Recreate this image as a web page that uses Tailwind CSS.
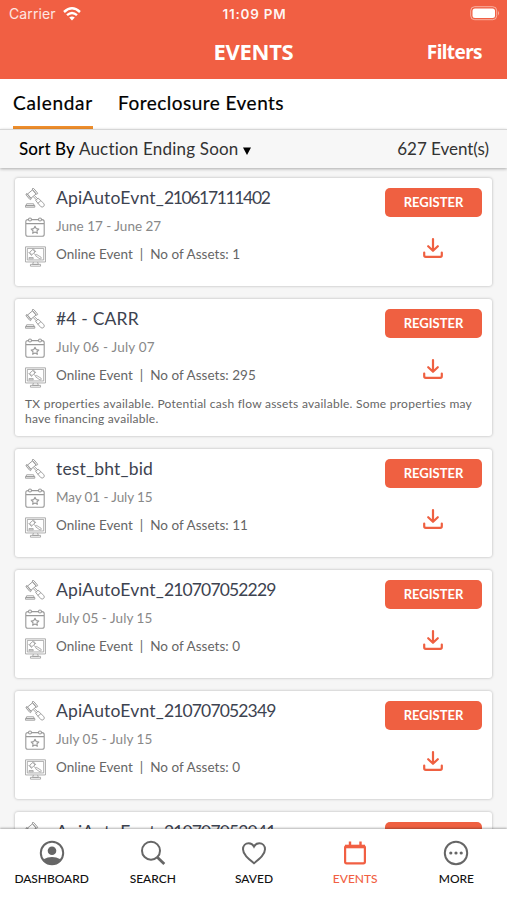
<!DOCTYPE html>
<html lang="en">
<head>
<meta charset="utf-8">
<title>Events</title>
<script src="https://cdn.jsdelivr.net/npm/@tailwindcss/browser@4"></script>
</head>
<body class="bg-[#f6f6f6]">
<svg class="hidden">
  <symbol id="gavel" viewBox="0 0 20 20" fill="none" stroke="currentColor" stroke-width=".9" stroke-linejoin="round" stroke-linecap="round">
    <g transform="translate(6.800 6) rotate(-40)"><rect x="-3.300" y="-2.700" width="6.600" height="5.400"/><rect x="-5" y="-3.500" width="1.700" height="7" rx=".8"/><rect x="3.300" y="-3.500" width="1.700" height="7" rx=".8"/></g>
    <path d="m9.700 7.900 3.200 3M8.600 8.900l3 3.200M13.400 10.300l5.400 5.200q1.200 1.600-.2 3-1.500 1.200-2.900 0l-4.800-5.700zM13 15.200l2.700-2.400M2 15.800h6.600l.6 1.800H1.400zM.8 17.600h9V19.200H.8z"/>
  </symbol>
  <symbol id="date" viewBox="0 0 20 20" fill="none" stroke="currentColor" stroke-width="1.100" stroke-linejoin="round">
    <path d="M3.500 2.600H3Q.8 2.600.8 4.800v12.400Q.8 19.300 3 19.300h14q2.200 0 2.200-2.100V4.800q0-2.200-2.200-2.200h-.5M6.500 2.600h7M.8 6.600h18.400"/>
    <circle cx="5" cy="2.500" r="1.500"/><circle cx="15" cy="2.500" r="1.500"/>
    <path d="m10 9.300 1.200 2.300 2.600.4-1.900 1.800.5 2.500-2.400-1.200-2.400 1.200.5-2.500L6.200 12l2.600-.4z"/>
  </symbol>
  <symbol id="online" viewBox="0 0 20 20" fill="none" stroke="currentColor" stroke-width=".75" stroke-linejoin="round">
    <path d="M.5.800h19v14.400H.5zM2.200 2.300h15.600v11H2.200zM8 15.200l-.7 2.300h5.400l-.7-2.300M5.200 17.500h9.600v1.700H5.200z"/>
    <g transform="translate(7 5.800) rotate(-40)"><rect x="-2" y="-1.600" width="4" height="3.200"/><path d="M-2.700-2.200v4.400M2.700-2.200v4.400"/></g>
    <path d="m8.500 7.200 2 1.500M11 8l4.300 2.700q.9 1.300-.9 1.700l-4.300-3zM3.800 11h4v1.200h-4z"/>
  </symbol>
  <symbol id="download" viewBox="0 0 20 20" fill="none" stroke="currentColor" stroke-width="2.200" stroke-linejoin="round" stroke-linecap="round">
    <path d="M10 1.100v11.500M5.200 8.200l4.800 4.600 4.800-4.600M1.200 14.500v2.800q0 1.500 1.500 1.500h14.600q1.500 0 1.500-1.500v-2.800"/>
  </symbol>
</svg>

<div class="w-[507px] h-[900px] flex flex-col overflow-hidden font-[Lato,sans-serif] text-black">
  <header class="shrink-0 h-[79px] bg-[#f15f43] text-white">
    <div class="h-7 grid grid-cols-3 items-center pl-[9px] pr-[7px] pb-px font-[Inter,sans-serif] text-[13px]">
      <div class="flex items-center gap-[7px] text-white/85"><span class="text-[14px] tracking-[0.1px]">Carrier</span>
        <svg class="w-[18px] h-[14px] text-white" viewBox="0 0 18 14" fill="none" stroke="currentColor" stroke-width="2.400"><path d="M1 5q8-7.400 16 0M4 8.200q5-4.400 10 0"/><path d="m9 13.500-2.800-3q2.800-2.200 5.600 0z" fill="currentColor" stroke="none"/></svg>
      </div>
      <div class="text-center font-semibold text-white/95 pt-px"><span class="text-[13.500px] tracking-[0.750px]">11:09 PM</span></div>
      <svg class="w-[30px] h-[15px] justify-self-end" viewBox="0 0 30 15"><rect x=".7" y=".7" width="26" height="13" rx="4" fill="none" stroke="#fff" stroke-opacity=".5"/><rect x="2.500" y="2.500" width="22.500" height="9.500" rx="2.500" fill="#fff"/><path d="M28 5q2 2.200 0 4.500z" fill="#fff" fill-opacity=".5"/></svg>
    </div>
    <div class="grid grid-cols-3 h-12 items-center font-['Noto_Sans',sans-serif] font-bold">
      <h1 class="col-start-2 text-center text-[22px] font-bold pb-[2px]"><span class="tracking-[-0.300px]">EVENTS</span></h1>
      <div class="text-right pr-[25px] pt-px text-[19px]"><span class="tracking-[-0.6px]">Filters</span></div>
    </div>
  </header>
  <nav class="shrink-0 h-[50px] bg-white flex gap-[25px] px-[13px] text-[19px] leading-[48px] font-normal [-webkit-text-stroke:0.2px_black]">
    <div class="h-[50px] w-[80px] border-b-3 border-[#ee8e2c]"><span class="tracking-[0.7px]">Calendar</span></div>
    <div><span class="tracking-[0.48px]">Foreclosure Events</span></div>
  </nav>
  <div class="relative z-10 shrink-0 h-[39px] bg-[#f7f7f7] border-t border-[#d6d6d6] shadow-[0_1px_3px_rgba(0,0,0,0.3)] flex justify-between items-center pl-[19px] pr-[18px] text-[17px] text-[#333]">
    <div class="flex items-center whitespace-pre"><span class="text-black font-medium tracking-[0.1px]">Sort By </span><span class="tracking-[0.2px]">Auction Ending Soon</span><svg class="ml-1 mt-1 w-2 h-2 text-black" viewBox="0 0 8 8"><path d="M0 .5h8L4 8z" fill="currentColor"/></svg></div>
    <span class="tracking-[-0.03px]">627 Event(s)</span>
  </div>
  <main id="events" class="flex-1 min-h-0 overflow-hidden px-[15px] pt-[10px] flex flex-col gap-[13px]"></main>
  <footer class="relative z-10 shrink-0 h-[71px] bg-white shadow-[0_-1px_2px_rgba(0,0,0,0.3)] grid grid-cols-5 text-[12px] leading-[19px] font-medium text-center text-[#111] pl-px">
    <div class="flex flex-col items-center pt-[11px]"><svg class="w-[26px] h-[26px]" viewBox="0 0 26 26"><circle cx="13" cy="13" r="11.200" fill="none" stroke="#666" stroke-width="2"/><circle cx="13" cy="10.800" r="4.300" fill="#666"/><path d="M4.500 19.300q8.500-4.600 17 0-3.500 4.900-8.500 4.900t-8.500-4.900z" fill="#666"/></svg><span class="mt-[3px] tracking-[-0.05px]">DASHBOARD</span></div>
    <div class="flex flex-col items-center pt-[11px]"><svg class="w-[26px] h-[26px]" viewBox="0 0 26 26" fill="none" stroke="#666" stroke-width="2"><circle cx="11" cy="10.700" r="9"/><path d="m17.300 17.300 7 6.700" stroke-width="2.800"/></svg><span class="mt-[3px]">SEARCH</span></div>
    <div class="flex flex-col items-center pt-[11px]"><svg class="w-[26px] h-[26px]" viewBox="0 0 26 26" fill="none" stroke="#666" stroke-width="2"><path d="M13 23.300C7 18.500 2 14.500 2 9.300 2 5.600 4.500 3.200 7.700 3.200c2.400 0 4.200 1.200 5.300 3.300 1.100-2.100 2.900-3.300 5.300-3.300 3.200 0 5.700 2.400 5.700 6.100 0 5.200-5 9.200-11 14z"/></svg><span class="mt-[3px]">SAVED</span></div>
    <div class="flex flex-col items-center pt-[11px] text-[#f15f43]"><svg class="w-[26px] h-[26px]" viewBox="0 0 26 26" fill="none" stroke="currentColor"><rect x="3.100" y="6" width="19.800" height="17.300" rx="1.500" stroke-width="2.200"/><path d="M3 6.500h20" stroke-width="3.600"/><path d="M8 1.500v5M18.500 1.500v5" stroke-width="2.400"/></svg><span class="mt-[3px]">EVENTS</span></div>
    <div class="flex flex-col items-center pt-[11px]"><svg class="w-[26px] h-[26px]" viewBox="0 0 26 26" fill="#666"><circle cx="13" cy="13" r="11.200" fill="none" stroke="#666" stroke-width="2"/><circle cx="7.800" cy="13" r="1.600"/><circle cx="13" cy="13" r="1.600"/><circle cx="18.200" cy="13" r="1.600"/></svg><span class="mt-[3px]">MORE</span></div>
  </footer>
</div>
<script>
const narrow = "tracking-[-1.35px]", regular = "tracking-[-0.85px]";
const events = [
  ["ApiAutoEvnt_", "210617111402", narrow, "June 17 - June 27", "tracking-[0px]", 1],
  ["#4 - CARR", "", regular, "July 06 - July 07", "tracking-[0.2px]", 295, "TX properties available. Potential cash flow assets available. Some properties may<br>have financing available."],
  ["test_bht_bid", "", regular, "May 01 - July 15", "tracking-[-0.1px]", 11],
  ["ApiAutoEvnt_", "210707052229", regular, "July 05 - July 15", "tracking-[0.05px]", 0],
  ["ApiAutoEvnt_", "210707052349", regular, "July 05 - July 15", "tracking-[0.05px]", 0],
  ["ApiAutoEvnt_", "210707053041", regular, "July 05 - July 15", "tracking-[0.05px]", 0]
];
document.getElementById("events").innerHTML = events.map(([name, digits, spacing, date, dateSpacing, assets, note]) => `
  <article class="shrink-0 bg-white rounded-[3px] shadow-[0_0_3px_rgba(0,0,0,0.28)] pl-[10px] pr-[10px] pt-[10px] ${note ? "h-[137px]" : "h-[108px]"}">
    <div class="flex justify-between">
      <div class="grid grid-cols-[21px_1fr] gap-x-[10px] grid-rows-[20px_20px_20px] gap-y-[9px] items-center text-[#999]">
        <svg class="w-5 h-5"><use href="#gavel"/></svg>
        <h2 class="text-[17.500px] text-[#3d4350] tracking-[0.18px]">${name}<span class="${spacing}">${digits}</span></h2>
        <svg class="w-5 h-5"><use href="#date"/></svg>
        <p class="text-[13.500px] leading-none pb-px text-[#888] ${dateSpacing}">${date}</p>
        <svg class="w-[21px] h-[21px]"><use href="#online"/></svg>
        <p class="text-[13.500px] leading-none pb-[3px] text-[#666] tracking-[0.03px] whitespace-pre">Online Event  |  No of Assets: ${assets}</p>
      </div>
      <div class="flex flex-col items-center gap-[21px]">
        <button class="w-[97px] h-[29px] rounded-[5px] bg-[#ef6041] text-white text-[13px] font-bold">REGISTER</button>
        <svg class="w-5 h-5 mr-[2px] text-[#ef6041]"><use href="#download"/></svg>
      </div>
    </div>
    ${note ? `<p class="mt-[9px] text-[12px] leading-[15px] text-[#666] tracking-[0.25px] whitespace-nowrap">${note}</p>` : ""}
  </article>`).join("");
</script>
</body>
</html>
